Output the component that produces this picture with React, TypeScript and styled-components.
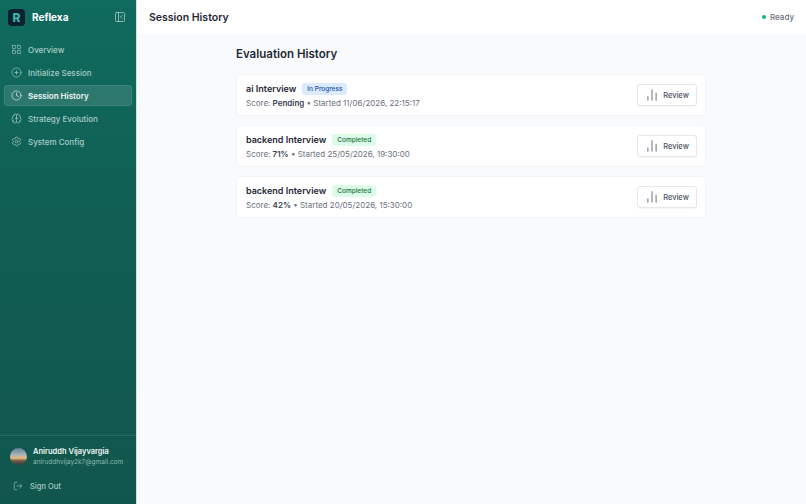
import React from 'react';
import styled, { createGlobalStyle } from 'styled-components';
import {
  LayoutGrid,
  CirclePlus,
  Clock,
  Brain,
  Settings,
  PanelLeftClose,
  ChartNoAxesColumn,
  LogOut,
} from 'lucide-react';

const GlobalStyle = createGlobalStyle`
  html, body, #root {
    margin: 0;
    height: 100%;
  }
  body {
    font-family: Inter, "Liberation Sans", sans-serif;
    background: #f8fafc;
    overflow: hidden;
  }
  * {
    box-sizing: border-box;
  }
`;

const Shell = styled.div`
  display: flex;
  width: 806px;
  height: 504px;
`;

const Sidebar = styled.aside`
  width: 137px;
  flex-shrink: 0;
  display: flex;
  flex-direction: column;
  background: linear-gradient(180deg, #0f6b5e 0%, #115e53 45%, #11564d 100%);
  border-right: 1px solid #cfe4df;
`;

const Brand = styled.div`
  height: 34px;
  margin-top: 0;
  padding: 0 10px 0 8px;
  display: flex;
  align-items: center;
  gap: 6px;
  flex-shrink: 0;
`;

const LogoMark = styled.div`
  width: 17px;
  height: 17px;
  border-radius: 4px;
  background: #0d2230;
  color: #3fb6ad;
  font-size: 12px;
  font-weight: 800;
  display: flex;
  align-items: center;
  justify-content: center;
`;

const BrandName = styled.span`
  flex: 1;
  margin-left: 1px;
  color: #ffffff;
  font-size: 10px;
  font-weight: 700;
`;

const CollapseButton = styled.span`
  display: flex;
  color: #b9d6d0;
`;

const Nav = styled.nav`
  padding: 5px 4px 0;
  display: flex;
  flex-direction: column;
  gap: 2px;
  flex: 1;
`;

const NavItem = styled.div<{ $active?: boolean }>`
  height: 21px;
  padding: 0 6px;
  display: flex;
  align-items: center;
  gap: 6px;
  border-radius: 4px;
  font-size: 8px;
  font-weight: ${(props) => (props.$active ? 600 : 500)};
  color: ${(props) => (props.$active ? '#f1f8f6' : '#a9cbc5')};
  background: ${(props) => (props.$active ? 'rgba(255, 255, 255, 0.12)' : 'transparent')};
  border: 1px solid ${(props) => (props.$active ? 'rgba(255, 255, 255, 0.1)' : 'transparent')};
`;

const Footer = styled.div`
  border-top: 1px solid rgba(255, 255, 255, 0.1);
  padding: 11px 10px 0;
  height: 69px;
`;

const UserRow = styled.div`
  display: flex;
  align-items: center;
  gap: 6px;
`;

const Avatar = styled.div`
  width: 17px;
  height: 17px;
  border-radius: 50%;
  flex-shrink: 0;
  background: linear-gradient(180deg, #5f7f96 0%, #a9b4b8 40%, #e9b877 60%, #6d5a4a 75%, #3e3a3a 100%);
`;

const UserText = styled.div`
  display: flex;
  flex-direction: column;
  gap: 2px;
`;

const UserName = styled.span`
  color: #f1f8f6;
  font-size: 7.5px;
  font-weight: 600;
  white-space: nowrap;
`;

const UserEmail = styled.span`
  color: #8fb8b0;
  font-size: 6.5px;
  white-space: nowrap;
`;

const SignOut = styled.div`
  margin-top: 15px;
  padding-left: 3px;
  display: flex;
  align-items: center;
  gap: 7px;
  color: #a9cbc5;
  font-size: 7.5px;
  font-weight: 500;
`;

const Main = styled.main`
  flex: 1;
  display: flex;
  flex-direction: column;
  min-width: 0;
`;

const TopBar = styled.header`
  height: 34px;
  flex-shrink: 0;
  padding: 0 12px;
  display: flex;
  align-items: center;
  justify-content: space-between;
  background: #ffffff;
`;

const PageTitle = styled.h1`
  margin: 0;
  color: #1f2937;
  font-size: 10.5px;
  font-weight: 600;
`;

const Status = styled.div`
  display: flex;
  align-items: center;
  gap: 4px;
  color: #6b7280;
  font-size: 8px;
  font-weight: 500;
`;

const StatusDot = styled.span`
  width: 4px;
  height: 4px;
  border-radius: 50%;
  background: #10b981;
`;

const Content = styled.div`
  width: 470px;
  margin-left: 99px;
  padding-top: 13px;
`;

const Heading = styled.h2`
  margin: 0 0 13px;
  color: #1f2937;
  font-size: 11.5px;
  font-weight: 600;
  line-height: 14px;
`;

const SessionList = styled.div`
  display: flex;
  flex-direction: column;
  gap: 9px;
`;

const SessionCard = styled.div`
  height: 42px;
  padding: 0 8px 0 9px;
  display: flex;
  align-items: center;
  justify-content: space-between;
  background: #ffffff;
  border: 1px solid #f1f3f6;
  border-radius: 4px;
`;

const SessionInfo = styled.div`
  display: flex;
  flex-direction: column;
  gap: 3px;
`;

const TitleRow = styled.div`
  display: flex;
  align-items: center;
  gap: 6px;
`;

const SessionTitle = styled.span`
  color: #1f2937;
  font-size: 9px;
  font-weight: 600;
`;

const Badge = styled.span<{ $tone: 'blue' | 'green' }>`
  height: 12px;
  padding: 0 5px;
  display: flex;
  align-items: center;
  border-radius: 3px;
  font-size: 6.5px;
  font-weight: 500;
  background: ${(props) => (props.$tone === 'blue' ? '#dbeafe' : '#dcfce7')};
  color: ${(props) => (props.$tone === 'blue' ? '#1e50a8' : '#16703f')};
`;

const Meta = styled.div`
  color: #6b7280;
  font-size: 8px;

  strong {
    color: #374151;
    font-weight: 600;
  }
`;

const ReviewButton = styled.button`
  width: 60px;
  height: 22px;
  padding: 0;
  display: flex;
  align-items: center;
  justify-content: center;
  gap: 4px;
  background: #ffffff;
  border: 1px solid #e5e7eb;
  border-radius: 3px;
  box-shadow: 0 1px 1px rgba(0, 0, 0, 0.04);
  color: #4b5563;
  font-family: inherit;
  font-size: 7.5px;
  font-weight: 500;
`;

const navItems = [
  { label: 'Overview', icon: LayoutGrid },
  { label: 'Initialize Session', icon: CirclePlus },
  { label: 'Session History', icon: Clock, active: true },
  { label: 'Strategy Evolution', icon: Brain },
  { label: 'System Config', icon: Settings },
];

const sessions: { title: string; status: string; tone: 'blue' | 'green'; score: string; started: string }[] = [
  { title: 'ai Interview', status: 'In Progress', tone: 'blue', score: 'Pending', started: '11/06/2026, 22:15:17' },
  { title: 'backend Interview', status: 'Completed', tone: 'green', score: '71%', started: '25/05/2026, 19:30:00' },
  { title: 'backend Interview', status: 'Completed', tone: 'green', score: '42%', started: '20/05/2026, 15:30:00' },
];

export default function App() {
  return (
    <Shell>
      <GlobalStyle />
      <Sidebar>
        <Brand>
          <LogoMark>R</LogoMark>
          <BrandName>Reflexa</BrandName>
          <CollapseButton>
            <PanelLeftClose size={12} strokeWidth={1.4} />
          </CollapseButton>
        </Brand>
        <Nav>
          {navItems.map((item) => (
            <NavItem key={item.label} $active={item.active}>
              <item.icon size={11} strokeWidth={1.4} />
              {item.label}
            </NavItem>
          ))}
        </Nav>
        <Footer>
          <UserRow>
            <Avatar />
            <UserText>
              <UserName>Aniruddh Vijayvargia</UserName>
              <UserEmail>aniruddhvijay2k7@gmail.com</UserEmail>
            </UserText>
          </UserRow>
          <SignOut>
            <LogOut size={10} strokeWidth={1.4} />
            Sign Out
          </SignOut>
        </Footer>
      </Sidebar>
      <Main>
        <TopBar>
          <PageTitle>Session History</PageTitle>
          <Status>
            <StatusDot />
            Ready
          </Status>
        </TopBar>
        <Content>
          <Heading>Evaluation History</Heading>
          <SessionList>
            {sessions.map((s) => (
              <SessionCard key={s.started}>
                <SessionInfo>
                  <TitleRow>
                    <SessionTitle>{s.title}</SessionTitle>
                    <Badge $tone={s.tone}>{s.status}</Badge>
                  </TitleRow>
                  <Meta>
                    Score: <strong>{s.score}</strong> • Started {s.started}
                  </Meta>
                </SessionInfo>
                <ReviewButton>
                  <ChartNoAxesColumn size={14} strokeWidth={1.4} />
                  Review
                </ReviewButton>
              </SessionCard>
            ))}
          </SessionList>
        </Content>
      </Main>
    </Shell>
  );
}
